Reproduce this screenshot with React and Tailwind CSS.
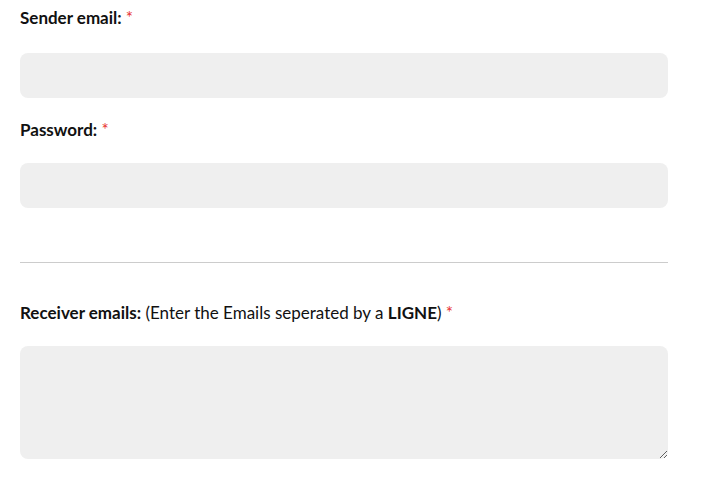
export default function App() {
  return (
    <div className="w-[701px] h-[478px] bg-white text-[#111111] overflow-hidden" style={{ fontFamily: "Lato, 'Noto Sans', sans-serif" }}>
      <div className="pl-5 w-[668px]">
        <label className="block pt-[6px] text-[17px] leading-6 font-bold">
          Sender email: <span className="text-[#e8322f] font-normal">*</span>
        </label>
        <input type="email" className="mt-[23px] block w-full h-[45px] rounded-lg bg-[#efefef] px-3 outline-none" />

        <label className="block mt-5 text-[17px] leading-6 font-bold">
          Password: <span className="text-[#e8322f] font-normal">*</span>
        </label>
        <input type="password" className="mt-[21px] block w-full h-[45px] rounded-lg bg-[#efefef] px-3 outline-none" />

        <hr className="mt-[54px] border-0 border-t border-[#cccccc]" />

        <label className="block mt-[38px] text-[17px] leading-6">
          <span className="font-bold">Receiver emails:</span> (Enter the Emails seperated by a <span className="font-bold">LIGNE</span>){" "}
          <span className="text-[#e8322f]">*</span>
        </label>
        <textarea className="mt-[21px] block w-full h-[113px] rounded-lg bg-[#efefef] px-3 py-2 outline-none" />
      </div>
    </div>
  );
}
